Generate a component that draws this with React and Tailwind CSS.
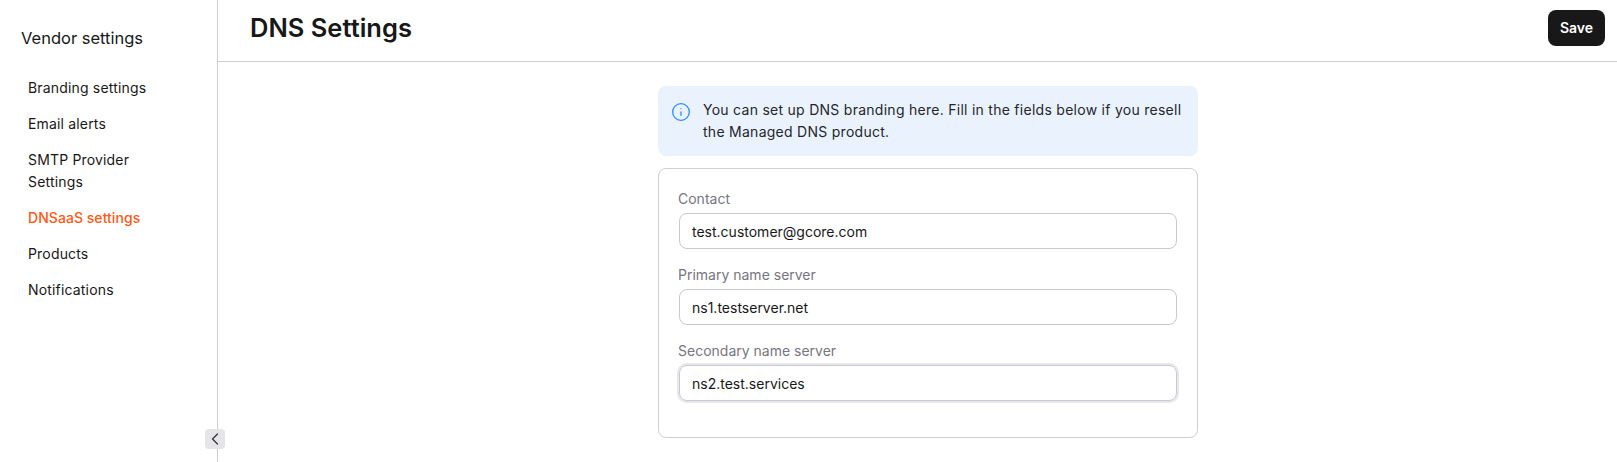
import React from "react";
import { Info, ChevronLeft } from "lucide-react";

const items = ["Branding settings", "Email alerts", "SMTP Provider Settings", "DNSaaS settings", "Products", "Notifications"];
const fields = [
  ["Contact", "test.customer@gcore.com", false],
  ["Primary name server", "ns1.testserver.net", false],
  ["Secondary name server", "ns2.test.services", true],
];

export default function App() {
  return (
    <div className="flex h-[462px] w-[1617px] overflow-hidden bg-white font-['Inter',sans-serif] text-[#181818]">
      <aside className="relative w-[218px] shrink-0 border-r border-[#cfcfcf] pl-[21px] pr-[48px] pt-[26px]">
        <h2 className="text-[16.5px] leading-6 font-normal">Vendor settings</h2>
        <nav className="mt-[20px] flex flex-col">
          {items.map((t) => (
            <a key={t} className={`py-[7px] pl-[7px] text-sm leading-[22px] ${t === "DNSaaS settings" ? "font-medium tracking-[0.05px] text-[#ff5913]" : "tracking-[0.17px] text-[#181818]"}`}>
              {t}
            </a>
          ))}
        </nav>
        <button className="absolute top-[429px] right-[-8px] flex h-5 w-5 items-center justify-center rounded bg-[#e4e4e9] text-[#363636]">
          <ChevronLeft size={22} strokeWidth={1.5} />
        </button>
      </aside>
      <div className="flex min-w-0 flex-1 flex-col">
        <header className="flex h-[62px] shrink-0 items-start justify-between border-b border-[#cfcfcf] pl-[32px] pr-3 pt-[10px]">
          <h1 className="text-[25.5px] leading-9 font-semibold">DNS Settings</h1>
          <button className="h-9 w-[57px] rounded-lg bg-[#181818] text-sm font-semibold text-white">Save</button>
        </header>
        <main className="flex flex-1 justify-center pl-[21px] pt-6">
          <div className="flex w-[540px] flex-col gap-3">
            <div className="flex gap-3 rounded-lg bg-[#eaf3fd] py-[13px] pl-[13px] pr-4 text-sm leading-[22px] tracking-[0.27px] text-[#24262b]">
              <Info size={20} strokeWidth={1.6} className="mt-[3px] shrink-0 text-[#2b8cff]" />
              <p>You can set up DNS branding here. Fill in the fields below if you resell the Managed DNS product.</p>
            </div>
            <form className="flex h-[270px] flex-col gap-[15px] rounded-lg border border-[#cfcfcf] px-5 pt-[19px]">
              {fields.map(([label, value, focused]) => (
                <label key={label} className="block">
                  <span className="mb-[3px] -ml-px block text-sm leading-[22px] text-[#77757f]">{label}</span>
                  <input
                    readOnly
                    value={value}
                    className={`block h-9 w-full rounded-lg border border-[#c9c9ce] px-3 text-sm text-[#181818] outline-none ${focused ? "shadow-[0_0_0_2px_#e6e6ec]" : ""}`}
                  />
                </label>
              ))}
            </form>
          </div>
        </main>
      </div>
    </div>
  );
}
